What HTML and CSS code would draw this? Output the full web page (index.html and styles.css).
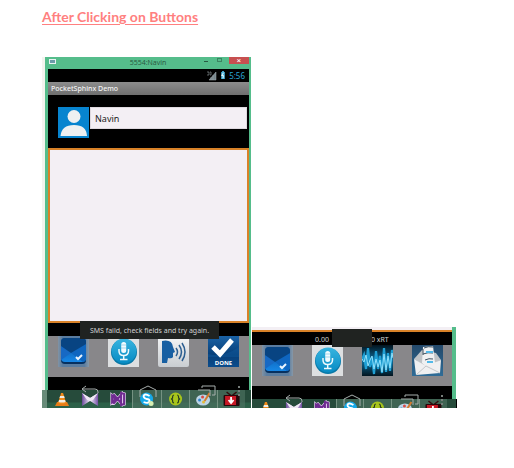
FILE: index.html
```html
<!DOCTYPE html>
<html lang="en">
<head>
<meta charset="utf-8">
<meta name="viewport" content="width=device-width, initial-scale=1">
<title>After Clicking on Buttons</title>
<link rel="stylesheet" href="styles.css">
</head>
<body>
<svg class="sprite" aria-hidden="true">
  <defs>
    <linearGradient id="g-side"><stop offset="0" stop-color="#8093a5"/><stop offset=".15" stop-color="#5a7c9f"/><stop offset=".85" stop-color="#5a7c9f"/><stop offset="1" stop-color="#8798a8"/></linearGradient>
    <linearGradient id="g-mail" x2="0" y2="1"><stop offset="0" stop-color="#0a4f9c"/><stop offset="1" stop-color="#1687e6"/></linearGradient>
    <linearGradient id="g-mic" x2="0" y2="1"><stop offset="0" stop-color="#38b4df"/><stop offset="1" stop-color="#078bc4"/></linearGradient>
    <linearGradient id="g-talk" x2="0" y2="1"><stop offset="0" stop-color="#f4f5f6"/><stop offset="1" stop-color="#c9cdd1"/></linearGradient>
    <linearGradient id="g-done" x2="0" y2="1"><stop offset="0" stop-color="#1a62a5"/><stop offset=".6" stop-color="#073f79"/><stop offset="1" stop-color="#0b4c8c"/></linearGradient>
    <linearGradient id="g-wave" x2="0" y2="1"><stop offset="0" stop-color="#03141f"/><stop offset=".5" stop-color="#0d6f9e"/><stop offset="1" stop-color="#031520"/></linearGradient>
    <linearGradient id="g-sms" x2="0" y2="1"><stop offset="0" stop-color="#24496a"/><stop offset="1" stop-color="#2f6c97"/></linearGradient>
    <linearGradient id="g-media"><stop offset="0" stop-color="#6d4b9c"/><stop offset=".5" stop-color="#f4effa"/><stop offset="1" stop-color="#7450a5"/></linearGradient>
  </defs>
  <symbol id="i-mail" viewBox="0 0 31 31">
    <rect width="31" height="31" fill="url(#g-side)"/>
    <rect x="3" y="4" width="25" height="24" rx="4" fill="#07305f"/>
    <rect x="3" y="2" width="25" height="24" rx="4" fill="url(#g-mail)"/>
    <path d="M3 10 13 17 3 24Z" fill="#1769c4"/>
    <path d="M28 8 13 17 25 26Q28 25 28 22Z" fill="#0f66c0"/>
    <path d="M3 10 13 17 28 8V6Q28 2 24 2H7Q3 2 3 6Z" fill="#084482"/>
    <path d="m18 21 2 2 4-4" fill="none" stroke="#eaf5ff" stroke-width="2"/>
  </symbol>
  <symbol id="i-mic" viewBox="0 0 31 31">
    <rect width="31" height="31" fill="#dddfe1"/>
    <circle cx="16" cy="16" r="13" fill="#0878a7"/>
    <circle cx="16" cy="15" r="12.4" fill="url(#g-mic)"/>
    <rect x="13.200" y="6" width="5" height="11" rx="2.500" fill="#f2fbff"/>
    <path d="M13 9h5M13 12h5" stroke="#6ebedb" stroke-width=".6"/>
    <path d="M11 13v2q0 4.500 4.700 4.500T20.500 15v-2M15.700 20v3M12 23.500h7.500" fill="none" stroke="#edf9fd" stroke-width="1.500"/>
  </symbol>
  <symbol id="i-talk" viewBox="0 0 31 31">
    <rect width="31" height="31" rx="2" fill="url(#g-talk)"/>
    <path d="M4 5Q14 3 15 11l2 5-2 1v4q-1 2-5 1l-1 5H4Z" fill="#175fa2"/>
    <path d="M18 12q3 4 0 8M21 9q5 7 0 14M24 7q6 9 0 18" fill="none" stroke="#2c5f91" stroke-width="1.500"/>
  </symbol>
  <symbol id="i-wave" viewBox="0 0 31 31">
    <rect width="31" height="31" fill="url(#g-wave)"/>
    <path d="m0 15 2-5 2 14 2-21 2 19 2-10 2 17 2-23 2 18 2-13 2 17 2-25 2 24 2-19 2 18 2-21 1 7" fill="none" stroke="#1f9fd4" stroke-width="2.200"/>
    <path d="m0 14 2 3 2-7 2 11 2-6 2-4 2 13 2-10 2 8 2-7 2 12 2-18 2 16 2-14 2 12 2-15 1 5" fill="none" stroke="#8fe0fb" stroke-width="1"/>
  </symbol>
  <symbol id="i-sms" viewBox="0 0 31 31">
    <rect width="31" height="31" fill="url(#g-sms)"/>
    <path d="m2 14 8-9 14 3 5 7-14 8Z" fill="#bfc3c6"/>
    <path d="m11 2 10-1 2 17-7 5-6-5Z" fill="#f0f1f2"/>
    <path d="M12 3q4-2 9-1M11 9q5-2 10-1M13 15q4-2 8-1M11 4v6" fill="none" stroke="#3f5261" stroke-width="1"/>
    <path d="M14 7h7M15 17h6" fill="none" stroke="#52b9e8" stroke-width="2.200"/>
    <path d="m2 14 12 7 15-6-1 13-24 2Z" fill="#f0f0f1"/>
    <path d="m4 30 10-9 14 7" fill="none" stroke="#c3c6c9"/>
  </symbol>
  <symbol id="i-user" viewBox="0 0 31 31">
    <rect width="31" height="31" fill="#0784cf"/>
    <circle cx="16" cy="9.500" r="6.500" fill="#eef0f1"/>
    <path d="M2.500 29q1-11 13.500-11t13 11Z" fill="#eef0f1"/>
  </symbol>
  <symbol id="i-signal" viewBox="0 0 10 10"><path d="M9 1v8H2ZM4 9V6M6 9V4" fill="#76858b" stroke="#a5afb3" stroke-width=".5"/><path d="M0 1h2v3H0M3 1h1v3H3" fill="none" stroke="#9aa5aa" stroke-width=".6"/></symbol>
  <symbol id="i-battery" viewBox="0 0 6 10"><path d="M2 0h2v1h1v8H1V1h1Z" fill="#4cb5df"/><path d="m3.500 2-2 3h2L3 8" fill="none" stroke="#fff"/></symbol>
  <symbol id="i-cone" viewBox="0 0 16 16"><path d="m1 15 2-4h10l2 4Z" fill="#e77c17"/><path d="m4 12 3-10h2l3 10q-4 2-8 0" fill="#f18b1b"/><path d="M6 5h4l.600 2H5.400ZM5 9h6l.600 2q-3.500 1-7.200 0Z" fill="#f2ece2"/></symbol>
  <symbol id="i-media" viewBox="0 0 16 16"><path d="M0 2 8 7l8-5v13L8 10l-8 5Z" fill="url(#g-media)"/><path d="m0 2 8 5 8-5-5 7-3 1-3-1Z" fill="#efe9f5"/></symbol>
  <symbol id="i-vs" viewBox="0 0 16 16"><path d="m2 5 3 3-3 3Zm0 0 2-1 7 8V4l-7 8-2-1M11 2l3 1v10l-3 1" fill="none" stroke="#e3cdef" stroke-width="3.400"/><path d="m2 5 3 3-3 3Zm0 0 2-1 7 8V4l-7 8-2-1M11 2l3 1v10l-3 1Z" fill="none" stroke="#6f2b91" stroke-width="2"/></symbol>
  <symbol id="i-skype" viewBox="0 0 16 16"><circle cx="8" cy="8" r="6.500" fill="#16a9e8"/><path d="M11 5q-5-3-6 0 0 2 3 3 3 0 3 2-1 3-6 1" fill="none" stroke="#fff" stroke-width="1.800"/><circle cx="12.500" cy="12.500" r="2.500" fill="#d6efb3"/></symbol>
  <symbol id="i-braces" viewBox="0 0 16 16"><circle cx="8" cy="8" r="6.500" fill="#a8c51c"/><path d="M6.500 4Q5 4 5 6v1L4 8l1 1v1q0 2 1.500 2M9.500 4Q11 4 11 6v1l1 1-1 1v1q0 2-1.500 2" fill="none" stroke="#263b20" stroke-width="1.200"/></symbol>
  <symbol id="i-paint" viewBox="0 0 16 16"><ellipse cx="7.500" cy="9" rx="7" ry="5.500" fill="#bdd5e6"/><circle cx="4" cy="9" r="1.500" fill="#3485cd"/><circle cx="7" cy="6" r="1.500" fill="#d94b46"/><circle cx="8" cy="11" r="1.500" fill="#e4bc36"/><path d="m9 10 5-8" stroke="#d47b2f" stroke-width="2"/></symbol>
  <symbol id="i-tv" viewBox="0 0 16 16"><path d="m3 1 5 4 5-4" fill="none" stroke="#300d0d" stroke-width="1.500"/><rect x="0" y="4" width="16" height="11" rx="1" fill="#26080b"/><rect x="1.500" y="5" width="11" height="9" fill="#c71925"/><path d="M7.500 6v5M5 9l2.500 3L10 9" fill="none" stroke="#fff" stroke-width="1.800"/></symbol>
  <symbol id="i-back" viewBox="0 0 20 12"><path d="m6 1-4 3 4 3M2 4h13q3 0 3 3v1" fill="none" stroke="#a7aead"/></symbol>
  <symbol id="i-home" viewBox="0 0 20 12"><path d="M2 12V5l8-4 8 4v7" fill="none" stroke="#a7aead"/></symbol>
  <symbol id="i-recent" viewBox="0 0 20 12"><path d="M5 3V1h13v9h-3M1 5h12v6" fill="none" stroke="#a7aead"/></symbol>
  <symbol id="i-more" viewBox="0 0 4 12"><path d="M1 1h2v2H1ZM1 5h2v2H1ZM1 9h2v2H1Z" fill="#777e7b"/></symbol>
</svg>
<main class="page">
  <h1>After Clicking on Buttons</h1>
  <div class="shots">
    <section class="shot shot-full" aria-label="Emulator">
      <div class="emulator">
        <header class="titlebar">
          <span class="app-icon"></span>
          <span class="window-name">5554:Navin</span>
          <button class="win-button minimize" aria-label="Minimize"></button>
          <button class="win-button maximize" aria-label="Maximize"></button>
          <button class="win-button close" aria-label="Close">×</button>
        </header>
        <div class="screen">
          <div class="status"><svg class="signal"><use href="#i-signal"/></svg><svg class="battery"><use href="#i-battery"/></svg><time>5:56</time></div>
          <h2>PocketSphinx Demo</h2>
          <div class="contact">
            <svg class="avatar"><use href="#i-user"/></svg>
            <input type="text" value="Navin" aria-label="Contact">
          </div>
          <textarea aria-label="Message"></textarea>
          <div class="strip"><p class="toast">SMS faild, check fields and try again.</p></div>
          <div class="actions">
            <button aria-label="Inbox"><svg><use href="#i-mail"/></svg></button>
            <button aria-label="Record"><svg><use href="#i-mic"/></svg></button>
            <button aria-label="Speak"><svg><use href="#i-talk"/></svg></button>
            <button>
              <svg viewBox="0 0 31 31">
                <rect width="31" height="31" fill="url(#g-done)"/>
                <path d="M0 18Q15 22 31 11V21H0Z" fill="#0f5799" opacity=".5"/>
                <path d="m5 11 7 7L24 4" fill="none" stroke="#fff" stroke-width="5"/>
                <text x="15.500" y="29" class="done-text">DONE</text>
              </svg>
            </button>
          </div>
          <nav class="keys" aria-label="Device keys">
            <button aria-label="Back"><svg><use href="#i-back"/></svg></button>
            <button aria-label="Home"><svg><use href="#i-home"/></svg></button>
            <button aria-label="Recent"><svg><use href="#i-recent"/></svg></button>
            <button class="more" aria-label="More"><svg><use href="#i-more"/></svg></button>
          </nav>
        </div>
      </div>
      <div class="taskbar">
        <svg><use href="#i-cone"/></svg><svg><use href="#i-media"/></svg><svg><use href="#i-vs"/></svg><svg class="running"><use href="#i-skype"/></svg><svg class="running"><use href="#i-braces"/></svg><svg class="running"><use href="#i-paint"/></svg><svg class="running"><use href="#i-tv"/></svg>
      </div>
    </section>
    <section class="shot shot-part" aria-label="Emulator, recognition running">
      <div class="emulator">
        <div class="screen">
          <div class="strip result"><span>0.00</span><span class="rate">0 xRT</span><span class="toast empty"></span></div>
          <div class="actions">
            <button aria-label="Inbox"><svg><use href="#i-mail"/></svg></button>
            <button aria-label="Record"><svg><use href="#i-mic"/></svg></button>
            <button aria-label="Listen"><svg><use href="#i-wave"/></svg></button>
            <button aria-label="Send message"><svg><use href="#i-sms"/></svg></button>
          </div>
          <nav class="keys" aria-label="Device keys">
            <button aria-label="Back"><svg><use href="#i-back"/></svg></button>
            <button aria-label="Home"><svg><use href="#i-home"/></svg></button>
            <button aria-label="Recent"><svg><use href="#i-recent"/></svg></button>
            <button class="more" aria-label="More"><svg><use href="#i-more"/></svg></button>
          </nav>
        </div>
      </div>
      <div class="taskbar">
        <svg><use href="#i-cone"/></svg><svg><use href="#i-media"/></svg><svg><use href="#i-vs"/></svg><svg class="running"><use href="#i-skype"/></svg><svg class="running"><use href="#i-braces"/></svg><svg class="running"><use href="#i-paint"/></svg><svg class="running"><use href="#i-tv"/></svg>
      </div>
    </section>
  </div>
</main>
</body>
</html>
```
FILE: styles.css
```css
* { box-sizing: border-box; }
body { margin: 0; background: #fff; font-family: Roboto, "Noto Sans", sans-serif; }
button { padding: 0; border: 0; background: none; font: inherit; }
svg { display: block; }
.sprite { position: absolute; width: 0; height: 0; }
.page { padding: 8px 57px 60px 42px; }
h1 {
  margin: 0 0 32px;
  color: #ff8080;
  font: bold 14px/17px Lato, sans-serif;
  text-decoration: underline;
  text-underline-offset: 2px;
}
.shots { display: grid; grid-template-columns: 209fr 205fr; gap: 1px; align-items: end; }
.shot { min-width: 0; }
.shot-full .emulator {
  margin-left: 3px;
  border: solid #55bd8b;
  border-width: 0 2px 0 3px;
  box-shadow: -3px 0 #f3f4ef;
}
.titlebar { display: flex; height: 12px; background: #55bd8b; }
.app-icon { width: 7px; height: 5px; margin: 2px 0 0 1px; border: 1px solid #e8f3f3; background: #6c9ca9; }
.window-name { flex: 1; padding-left: 36px; color: #29563f; font: 7px/11px "Open Sans", sans-serif; text-align: center; }
.win-button { color: #285a42; }
.minimize { width: 4px; height: 5px; margin-right: 9px; border-bottom: 1px solid; }
.maximize { width: 5px; height: 4px; margin: 1px 7px 0 0; border: 1px solid #3b8461; }
.close { width: 20px; height: 7px; background: #c75050; color: #fff; font-size: 8px; line-height: 7px; }
.screen { background: #000; }
.status { display: flex; justify-content: flex-end; align-items: center; gap: 3px; height: 13px; padding-right: 4px; color: #2aa5d3; font: 8px/13px "Noto Sans", sans-serif; }
.signal { width: 10px; height: 10px; }
.battery { width: 6px; height: 9px; }
h2 { margin: 0; padding-left: 3px; background: linear-gradient(#8c8c8c, #6f6f6f); color: #f3f3f3; font: 500 7px/13px "Noto Sans", sans-serif; }
.contact { display: flex; align-items: flex-start; gap: 1px; padding: 12px 2px 10px 10px; }
.avatar { flex: none; width: 31px; height: 31px; }
input { flex: 1; min-width: 0; height: 22px; margin: 0; padding: 0 4px; border: 1px solid #ded9df; border-radius: 0; background: #f3eff4; color: #222; font: 9px/20px "Noto Sans", sans-serif; }
textarea { display: block; width: 100%; height: 175px; margin: 0; border: 2px solid #d98228; border-radius: 0; background: #f3eff4; resize: none; }
.strip { position: relative; height: 13px; color: #d2d2d2; font: 7px/14px "Noto Sans", sans-serif; }
.toast { position: absolute; top: -2px; left: 16%; right: 15%; height: 18px; margin: 0; background: #202321; line-height: 19px; text-align: center; white-space: nowrap; }
.actions { display: grid; grid-template-columns: repeat(4, 1fr); justify-items: center; height: 41px; background: #88878a; }
.actions button, .actions svg { width: 31px; height: 31px; }
.done-text { fill: #fff; font: bold 6px "Noto Sans", sans-serif; text-anchor: middle; }
.keys { display: grid; grid-template-columns: 84fr 32fr 84fr; align-items: start; justify-items: center; position: relative; z-index: 1; height: 13px; padding-top: 8px; }
.keys svg { width: 20px; height: 12px; }
.keys .more { position: absolute; right: 8px; top: 8px; }
.keys .more svg { width: 4px; }
.taskbar { display: grid; grid-template-columns: repeat(7, 1fr); height: 18px; padding: 0 6px; background: linear-gradient(#264b3b 12px, #2c6048 13px); overflow: hidden; position: relative; }
.shot-full .taskbar { border-left: 5px solid #688b79; padding-left: 1px; }
.taskbar svg { width: 100%; height: 18px; padding: 1px 0; }
.running { border-left: 1px solid #759282; background: #4c7060aa; }
.shot-part .emulator { border-right: 4px solid #55bd8b; margin-right: 1px; }
.shot-part .screen { border-top: 3px solid #f3eff4; }
.result { display: flex; height: 15px; padding-left: 63px; border-top: 2px solid #d98228; line-height: 15px; }
.result .rate { margin-left: 42px; }
.toast.empty { left: 40%; right: 40%; top: -3px; }
.shot-part .taskbar { height: 9px; padding: 0 9px 0 0; border-right: 1px solid #000; }
.shot-part .taskbar svg { height: 18px; }
.shot-part .taskbar { background: #264b3b; }
```
